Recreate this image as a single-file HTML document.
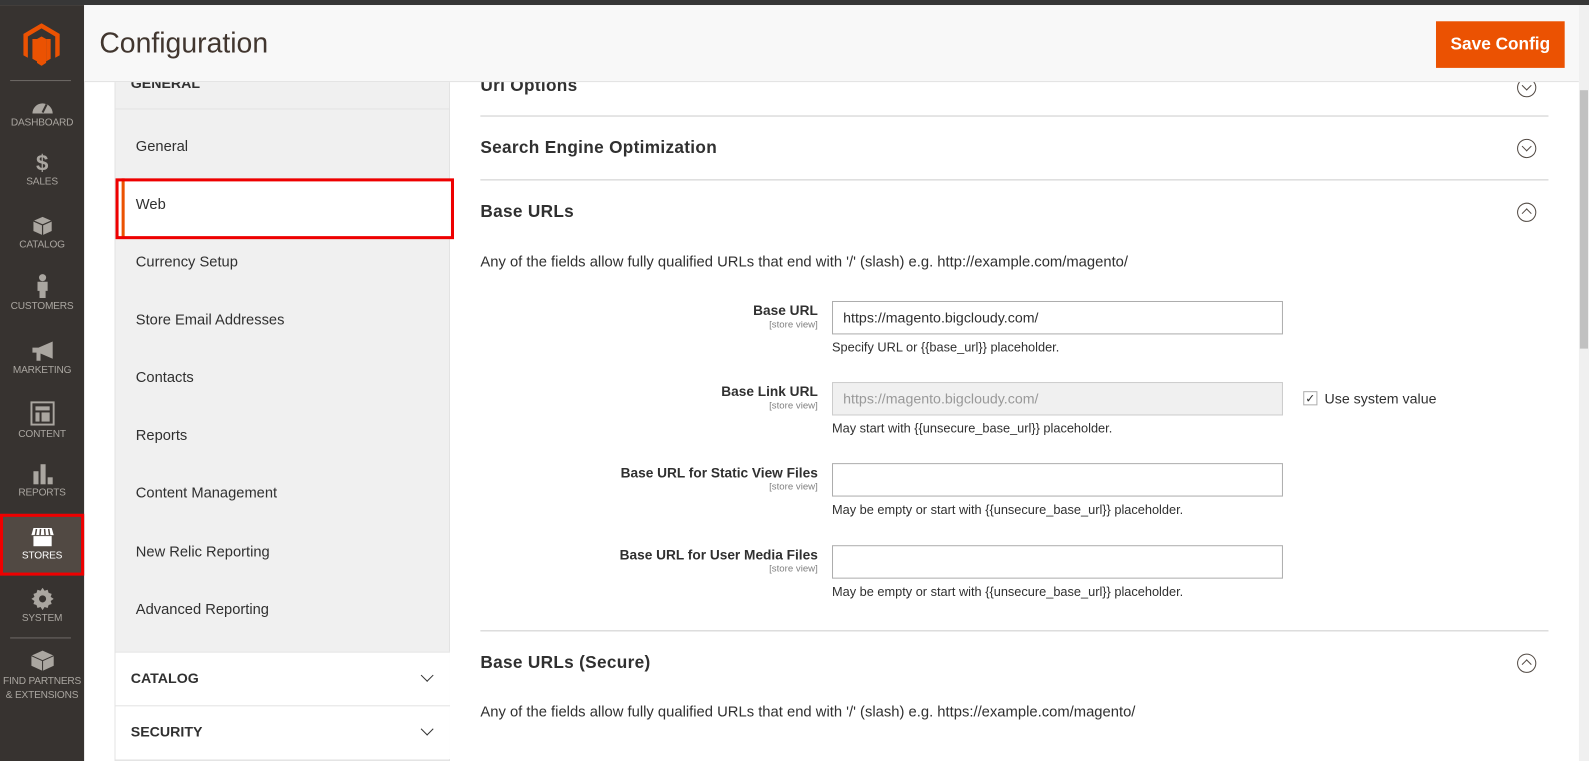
<!DOCTYPE html>
<html><head><meta charset="utf-8"><style>
*{box-sizing:border-box;margin:0;padding:0}
body{width:1589px;height:751px;overflow:hidden;background:#fff;font-family:"Liberation Sans",sans-serif;color:#303030;position:relative}
#w{position:absolute;left:0;top:0;width:1568px;height:741px;transform:scale(1.0134);transform-origin:0 0}
.top{position:absolute;left:0;top:0;width:1568px;height:5px;background:#373737}
.side{position:absolute;left:0;top:5px;width:83px;height:746px;background:#373330}
.nav{position:absolute;left:0;width:83px;text-align:center;color:#aaa6a0;font-size:10px;white-space:nowrap;letter-spacing:-.2px}
.nav svg{display:block;margin:0 auto 3px}
.hdr{position:absolute;left:83px;top:5px;width:1475px;height:76px;background:#f8f8f8;border-bottom:1px solid #e3e3e3}
.hdr h1{position:absolute;left:15px;top:22px;font-weight:normal;font-size:28px;color:#41362f}
.btn{position:absolute;left:1334px;top:16px;width:127px;height:46px;background:#eb5202;color:#fff;font-weight:bold;font-size:17px;text-align:center;line-height:46px}
.sb{position:absolute;left:1558px;top:5px;width:10px;height:746px;background:#f0f0f0}
.sb i{position:absolute;left:1px;top:84px;width:8px;height:255px;background:#c1c1c1}
.panel{position:absolute;left:113px;top:81px;width:331px;height:670px;background:#f0f0f0;border:1px solid #e3e3e3;border-top:none}
.item{position:absolute;left:20px;font-size:14.5px;color:#303030}
.sep{position:absolute;left:0;width:330px;height:1px;background:#e3e3e3}
.web{position:absolute;left:0;top:97px;width:330px;height:57px;background:#fff}
.redbox{position:absolute;border:3px solid #e00}
.sec{position:absolute;left:0;width:330px;height:53px;background:#fff;border-top:1px solid #e3e3e3;font-weight:bold;font-size:14px;padding:17px 15px;color:#303030}
.chev{position:absolute;right:18px;top:18px;width:9px;height:9px;border-right:1.5px solid #333;border-bottom:1.5px solid #333;transform:rotate(45deg)}
.h2{position:absolute;left:474px;font-size:17px;font-weight:bold;color:#303030;letter-spacing:.3px}
.line{position:absolute;left:474px;width:1054px;height:1px;background:#cccccc}
.circ{position:absolute;left:1497px;width:19px;height:19px;border:1px solid #514943;border-radius:50%}
.circ:after{content:"";position:absolute;left:5px;width:6px;height:6px;border-right:1px solid #514943;border-bottom:1px solid #514943}
.dn:after{top:3px;transform:rotate(45deg)}
.up:after{top:6px;transform:rotate(-135deg)}
.note{position:absolute;left:474px;font-size:14.6px;color:#303030}
.lbl{position:absolute;right:761px;text-align:right;font-size:13.5px;font-weight:bold;color:#303030}
.lbl small{display:block;font-weight:normal;font-size:9.5px;color:#808080;margin-top:1px}
.inp{position:absolute;left:821px;width:445px;height:33px;border:1px solid #adadad;background:#fff;font-size:14px;padding:7px 10px;color:#303030}
.hint{position:absolute;left:821px;font-size:12.6px;color:#303030}
</style></head><body><div id="w">
<div class="top"></div>
<div class="side">
<svg style="position:absolute;left:23px;top:18px" width="36" height="42" viewBox="0 0 36 42"><path d="M18 0L36 10.5V31.5L31.5 34V13L18 5L4.5 13V34L0 31.5V10.5Z" fill="#eb5202"/><path d="M13.5 15.5L18 13L22.5 15.5V39L18 42L13.5 39Z" fill="#eb5202"/><path d="M9 15.5v19.5l4.5 2.6V15.5M27 15.5v19.5l-4.5 2.6V15.5" fill="#eb5202"/></svg>
<div style="position:absolute;left:10px;top:74px;width:60px;height:1px;background:#6e6a66"></div>
<div style="position:absolute;left:10px;top:624px;width:60px;height:1px;background:#6e6a66"></div>
</div>
<div class="nav" style="top:95px"><svg width="24" height="18"><path d="M2 17A10 10 0 1 1 22 17Z" fill="#aaa6a0"/><path d="M12 16l4-8" stroke="#373330" stroke-width="2"/></svg>DASHBOARD</div>
<div class="nav" style="top:151px"><div style="font-size:22px;font-weight:bold;line-height:20px;margin-bottom:3px">$</div>SALES</div>
<div class="nav" style="top:213px"><svg width="20" height="20"><path d="M10 1L19 5V15L10 19L1 15V5Z" fill="#aaa6a0"/><path d="M1 5L10 9L19 5M10 9V19" stroke="#373330" stroke-width="1.2" fill="none"/></svg>CATALOG</div>
<div class="nav" style="top:270px"><svg width="14" height="24"><circle cx="7" cy="4" r="3.5" fill="#aaa6a0"/><path d="M2 8H12V17H10V24H4V17H2Z" fill="#aaa6a0"/></svg>CUSTOMERS</div>
<div class="nav" style="top:337px"><svg width="24" height="20"><path d="M2 6H8L22 0V17L8 11H2Z M6 11H10V19H6Z" fill="#aaa6a0"/></svg>MARKETING</div>
<div class="nav" style="top:396px"><svg width="24" height="24"><rect x="1" y="1" width="22" height="22" fill="none" stroke="#aaa6a0" stroke-width="2"/><rect x="5" y="5" width="14" height="4" fill="#aaa6a0"/><rect x="5" y="11" width="4" height="9" fill="#aaa6a0"/><rect x="11" y="11" width="8" height="9" fill="#aaa6a0"/></svg>CONTENT</div>
<div class="nav" style="top:458px"><svg width="22" height="20"><rect x="2" y="7" width="5" height="13" fill="#aaa6a0"/><rect x="9" y="0" width="5" height="20" fill="#aaa6a0"/><rect x="16" y="13" width="5" height="7" fill="#aaa6a0"/></svg>REPORTS</div>
<div style="position:absolute;left:0;top:507px;width:83px;height:61px;background:#514943;border:3px solid #e00"></div>
<div class="nav" style="top:520px;color:#fff"><svg width="24" height="20"><path d="M3 1H21L23 8H1Z" fill="#fff"/><path d="M6 2L5 8M10 2L9.5 8M14 2L14.5 8M18 2L19 8" stroke="#514943" stroke-width="1.5"/><rect x="3" y="9" width="18" height="10" fill="#fff"/></svg>STORES</div>
<div class="nav" style="top:580px"><svg width="22" height="22" viewBox="0 0 22 22"><path d="M11 0l2 3 3-1 1 3 3 1-1 3 3 2-3 2 1 3-3 1-1 3-3-1-2 3-2-3-3 1-1-3-3-1 1-3-3-2 3-2-1-3 3-1 1-3 3 1z" fill="#aaa6a0"/><circle cx="11" cy="11" r="3.5" fill="#373330"/></svg>SYSTEM</div>
<div class="nav" style="top:641px;line-height:14px"><svg width="24" height="22"><path d="M12 1L23 6V16L12 21L1 16V6Z" fill="#aaa6a0"/><path d="M1 6L12 11L23 6M12 11V21" stroke="#373330" stroke-width="1" fill="none"/></svg>FIND PARTNERS<br>&amp; EXTENSIONS</div>

<div class="panel">
<div style="position:absolute;left:15px;top:-7px;font-weight:bold;font-size:14px;color:#303030">GENERAL</div>
<div class="sep" style="top:26px"></div>
<div class="item" style="top:56px">General</div>
<div class="web"></div>
<div style="position:absolute;left:6px;top:95px;width:3px;height:58px;background:#eb5202"></div>
<div class="item" style="top:113px">Web</div>
<div class="item" style="top:170px">Currency Setup</div>
<div class="item" style="top:227px">Store Email Addresses</div>
<div class="item" style="top:284px">Contacts</div>
<div class="item" style="top:341px">Reports</div>
<div class="item" style="top:398px">Content Management</div>
<div class="item" style="top:456px">New Relic Reporting</div>
<div class="item" style="top:513px">Advanced Reporting</div>
<div class="sec" style="top:562px">CATALOG<i class="chev"></i></div>
<div class="sec" style="top:615px">SECURITY<i class="chev"></i></div>
</div>
<div class="redbox" style="left:114px;top:176px;width:334px;height:60px"></div>

<div class="h2" style="top:75px">Url Options</div>
<div class="circ dn" style="top:77px"></div>
<div class="line" style="top:114px"></div>
<div class="h2" style="top:136px">Search Engine Optimization</div>
<div class="circ dn" style="top:137px"></div>
<div class="line" style="top:177px"></div>
<div class="h2" style="top:199px">Base URLs</div>
<div class="circ up" style="top:200px"></div>
<div class="note" style="top:251px">Any of the fields allow fully qualified URLs that end with '/' (slash) e.g. http://example.com/magento/</div>

<div class="lbl" style="top:299px">Base URL<small>[store view]</small></div>
<div class="inp" style="top:297px">https://magento.bigcloudy.com/</div>
<div class="hint" style="top:336px">Specify URL or {{base_url}} placeholder.</div>

<div class="lbl" style="top:379px">Base Link URL<small>[store view]</small></div>
<div class="inp" style="top:377px;background:#f0f0f0;border-color:#ccc;color:#999">https://magento.bigcloudy.com/</div>
<div style="position:absolute;left:1286px;top:386px;width:14px;height:14px;border:1px solid #adadad;background:#fff;font-size:12px;line-height:12px;text-align:center;color:#303030">✓</div>
<div style="position:absolute;left:1307px;top:385px;font-size:14px">Use system value</div>
<div class="hint" style="top:416px">May start with {{unsecure_base_url}} placeholder.</div>

<div class="lbl" style="top:459px">Base URL for Static View Files<small>[store view]</small></div>
<div class="inp" style="top:457px"></div>
<div class="hint" style="top:496px">May be empty or start with {{unsecure_base_url}} placeholder.</div>

<div class="lbl" style="top:540px">Base URL for User Media Files<small>[store view]</small></div>
<div class="inp" style="top:538px"></div>
<div class="hint" style="top:577px">May be empty or start with {{unsecure_base_url}} placeholder.</div>

<div class="line" style="top:622px"></div>
<div class="h2" style="top:644px">Base URLs (Secure)</div>
<div class="circ up" style="top:645px"></div>
<div class="note" style="top:695px">Any of the fields allow fully qualified URLs that end with '/' (slash) e.g. https://example.com/magento/</div>

<div class="hdr"><h1>Configuration</h1><div class="btn">Save Config</div></div>
<div class="sb"><i></i></div>
</div></body></html>
